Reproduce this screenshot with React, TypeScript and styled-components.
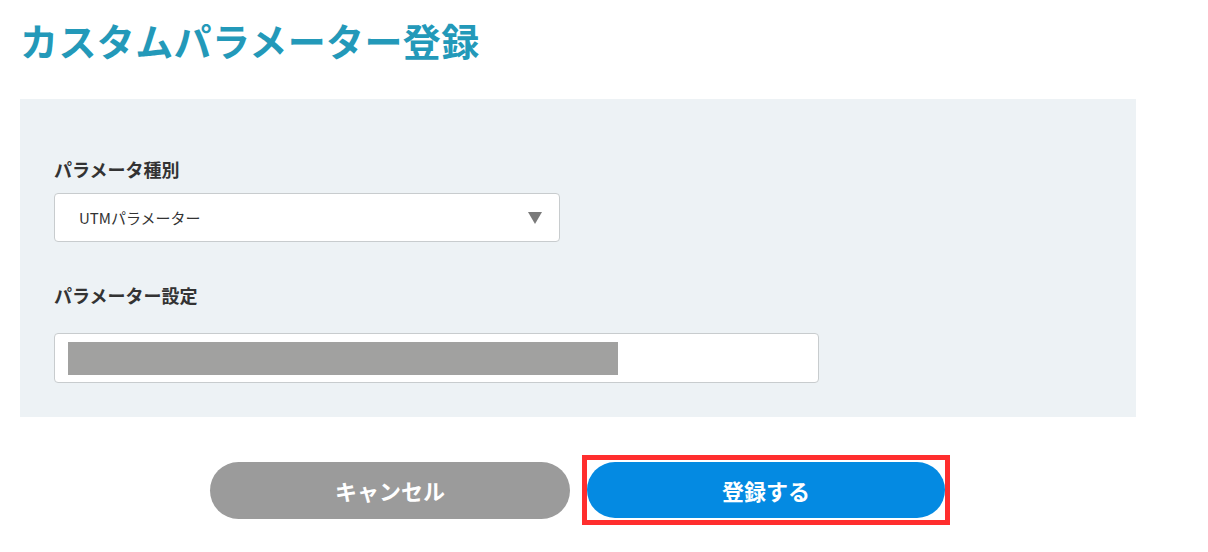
import React from 'react';
import styled, { createGlobalStyle } from 'styled-components';

const GlobalStyle = createGlobalStyle`
  body {
    margin: 0;
    background: #fff;
    font-family: "Noto Sans CJK JP", "Noto Sans", sans-serif;
    color: #333;
  }
`;

const Page = styled.div`
  padding: 0 20px;
  width: 1116px;
`;

const Title = styled.h1`
  margin: 0;
  padding-top: 18px;
  font-size: 38px;
  line-height: 44px;
  font-weight: 700;
  color: #2399b9;
  letter-spacing: 0.4px;
`;

const Panel = styled.div`
  margin-top: 37px;
  background: #edf2f5;
  padding: 58px 34px 34px;
`;

const Field = styled.div<{ $gap: number }>`
  display: flex;
  flex-direction: column;
  gap: ${p => p.$gap}px;
  & + & {
    margin-top: 41px;
  }
`;

const Label = styled.div`
  font-size: 18px;
  line-height: 24px;
  font-weight: 700;
  color: #333;
`;

const SelectBox = styled.div`
  box-sizing: border-box;
  width: 506px;
  height: 49px;
  background: #fff;
  border: 1px solid #c8ccce;
  border-radius: 4px;
  display: flex;
  align-items: center;
  justify-content: space-between;
  padding: 0 17px 0 24px;
  font-size: 15px;
  color: #333;
`;

const Arrow = styled.span`
  width: 0;
  height: 0;
  border-left: 7.5px solid transparent;
  border-right: 7.5px solid transparent;
  border-top: 12px solid #7a7a7a;
`;

const InputBox = styled.div`
  box-sizing: border-box;
  width: 765px;
  height: 50px;
  background: #fff;
  border: 1px solid #c8ccce;
  border-radius: 4px;
  display: flex;
  align-items: center;
  padding: 0 13px;
`;

const Masked = styled.div`
  width: 550px;
  height: 33px;
  background: #a1a1a0;
`;

const Actions = styled.div`
  margin-top: 38px;
  padding-left: 4px;
  display: flex;
  justify-content: center;
  align-items: center;
  gap: 12px;
`;

const Button = styled.button<{ $tone: 'gray' | 'blue' }>`
  border: none;
  width: ${p => (p.$tone === 'gray' ? 360 : 358)}px;
  height: ${p => (p.$tone === 'gray' ? 57 : 56)}px;
  border-radius: 29px;
  background: ${p => (p.$tone === 'gray' ? '#9b9b9b' : '#048ae2')};
  color: #fff;
  font-family: "Noto Sans CJK JP", sans-serif;
  font-size: 22px;
  font-weight: 700;
  cursor: pointer;
  display: block;
`;

const Highlight = styled.div`
  border: 5px solid #ff2e2e;
  padding: 2px 0;
  display: flex;
`;

export default function App() {
  return (
    <>
      <GlobalStyle />
      <Page>
        <Title>カスタムパラメーター登録</Title>
        <Panel>
          <Field $gap={12}>
            <Label>パラメータ種別</Label>
            <SelectBox>
              <span>UTMパラメーター</span>
              <Arrow />
            </SelectBox>
          </Field>
          <Field $gap={26}>
            <Label>パラメーター設定</Label>
            <InputBox>
              <Masked />
            </InputBox>
          </Field>
        </Panel>
        <Actions>
          <Button $tone="gray">キャンセル</Button>
          <Highlight>
            <Button $tone="blue">登録する</Button>
          </Highlight>
        </Actions>
      </Page>
    </>
  );
}
